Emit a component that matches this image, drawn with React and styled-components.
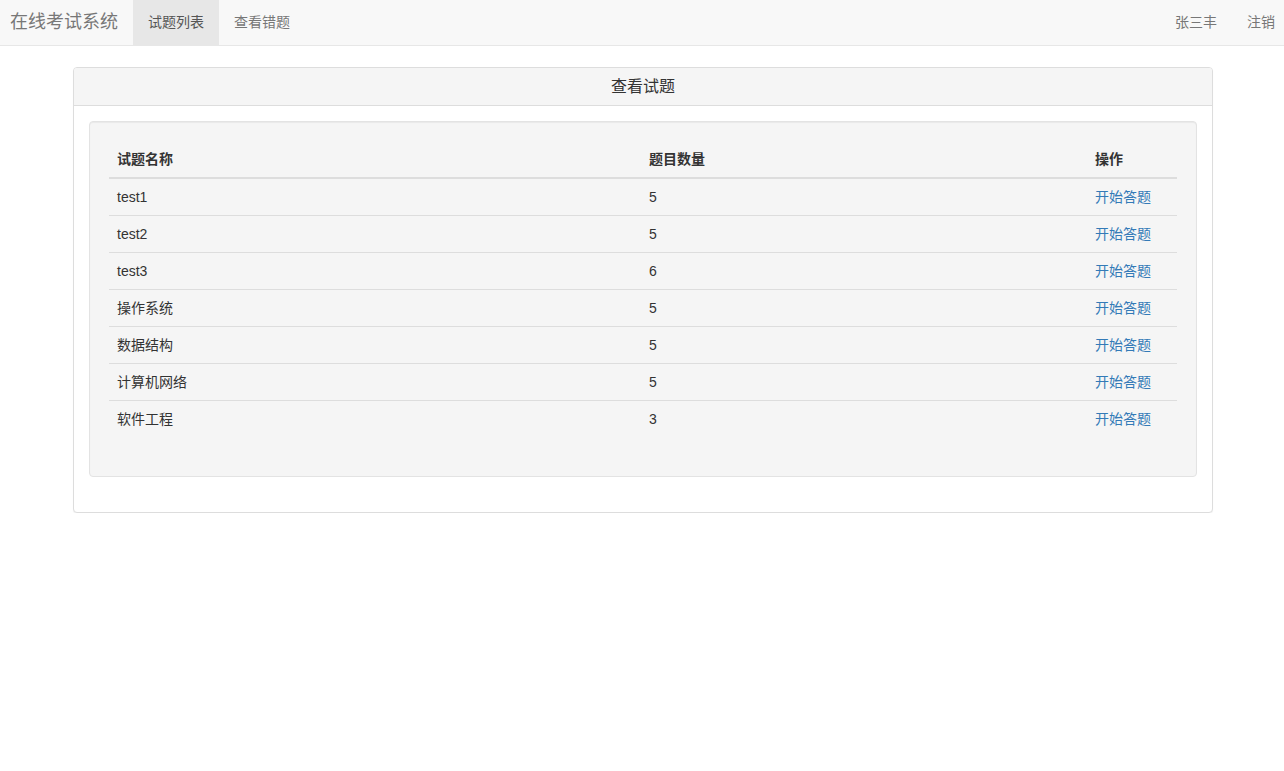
import React from "react";
import styled, { createGlobalStyle } from "styled-components";

const Global = createGlobalStyle`
  html, body { margin: 0; padding: 0; background: #fff; }
  body {
    font-family: "Liberation Sans", "Noto Sans CJK SC", Arial, sans-serif;
    font-size: 14px;
    line-height: 1.42857;
    color: #333;
  }
  * { box-sizing: border-box; }
`;

const Navbar = styled.nav`
  display: flex;
  align-items: stretch;
  justify-content: space-between;
  height: 46px;
  background: #f8f8f8;
  border-bottom: 1px solid #e7e7e7;
  margin-bottom: 21px;
  overflow: hidden;
`;

const NavGroup = styled.div`
  display: flex;
  align-items: stretch;
  margin-right: ${(p) => (p.$right ? "-6px" : "0")};
`;

const Brand = styled.a`
  display: flex;
  align-items: center;
  padding: 0 15px 0 10px;
  font-size: 18px;
  color: #777;
  text-decoration: none;
`;

const NavLink = styled.a`
  display: flex;
  align-items: center;
  padding: 0 15px;
  color: ${(p) => (p.$active ? "#555" : "#777")};
  background: ${(p) => (p.$active ? "#e7e7e7" : "transparent")};
  text-decoration: none;
  font-size: 14px;
`;

const Container = styled.div`
  width: 1142px;
  padding-left: 2px;
  margin: 0 auto;
`;

const Panel = styled.div`
  background: #fff;
  border: 1px solid #ddd;
  border-radius: 4px;
  box-shadow: 0 1px 1px rgba(0, 0, 0, 0.05);
`;

const PanelHeading = styled.div`
  background: #f5f5f5;
  border-bottom: 1px solid #ddd;
  border-radius: 3px 3px 0 0;
  padding: 8px 15px;
  text-align: center;
  font-size: 16px;
  line-height: 21px;
  color: #333;
`;

const PanelBody = styled.div`
  padding: 15px;
`;

const Well = styled.div`
  background: #f5f5f5;
  border: 1px solid #e3e3e3;
  border-radius: 4px;
  box-shadow: inset 0 1px 1px rgba(0, 0, 0, 0.05);
  padding: 19px;
  margin-bottom: 20px;
`;

const Table = styled.table`
  width: 100%;
  border-collapse: collapse;
  border-spacing: 0;
  margin-bottom: 20px;
`;

const Th = styled.th`
  text-align: left;
  font-weight: bold;
  padding: 8px;
  line-height: 20px;
  border-bottom: 2px solid #ddd;
  width: ${(p) => p.$w || "auto"};
`;

const Td = styled.td`
  padding: 8px;
  line-height: 20px;
  border-top: ${(p) => (p.$first ? "none" : "1px solid #ddd")};
`;

const ActionLink = styled.a`
  color: #337ab7;
  text-decoration: none;
`;

const rows = [
  ["test1", 5],
  ["test2", 5],
  ["test3", 6],
  ["操作系统", 5],
  ["数据结构", 5],
  ["计算机网络", 5],
  ["软件工程", 3],
];

export default function App() {
  return (
    <>
      <Global />
      <Navbar>
        <NavGroup>
          <Brand href="#">在线考试系统</Brand>
          <NavLink href="#" $active>试题列表</NavLink>
          <NavLink href="#">查看错题</NavLink>
        </NavGroup>
        <NavGroup $right>
          <NavLink href="#">张三丰</NavLink>
          <NavLink href="#">注销</NavLink>
        </NavGroup>
      </Navbar>
      <Container>
        <Panel>
          <PanelHeading>查看试题</PanelHeading>
          <PanelBody>
            <Well>
              <Table>
                <thead>
                  <tr>
                    <Th $w="532px">试题名称</Th>
                    <Th $w="446px">题目数量</Th>
                    <Th>操作</Th>
                  </tr>
                </thead>
                <tbody>
                  {rows.map(([name, n], i) => (
                    <tr key={name}>
                      <Td $first={i === 0}>{name}</Td>
                      <Td $first={i === 0}>{n}</Td>
                      <Td $first={i === 0}>
                        <ActionLink href="#">开始答题</ActionLink>
                      </Td>
                    </tr>
                  ))}
                </tbody>
              </Table>
            </Well>
          </PanelBody>
        </Panel>
      </Container>
    </>
  );
}
